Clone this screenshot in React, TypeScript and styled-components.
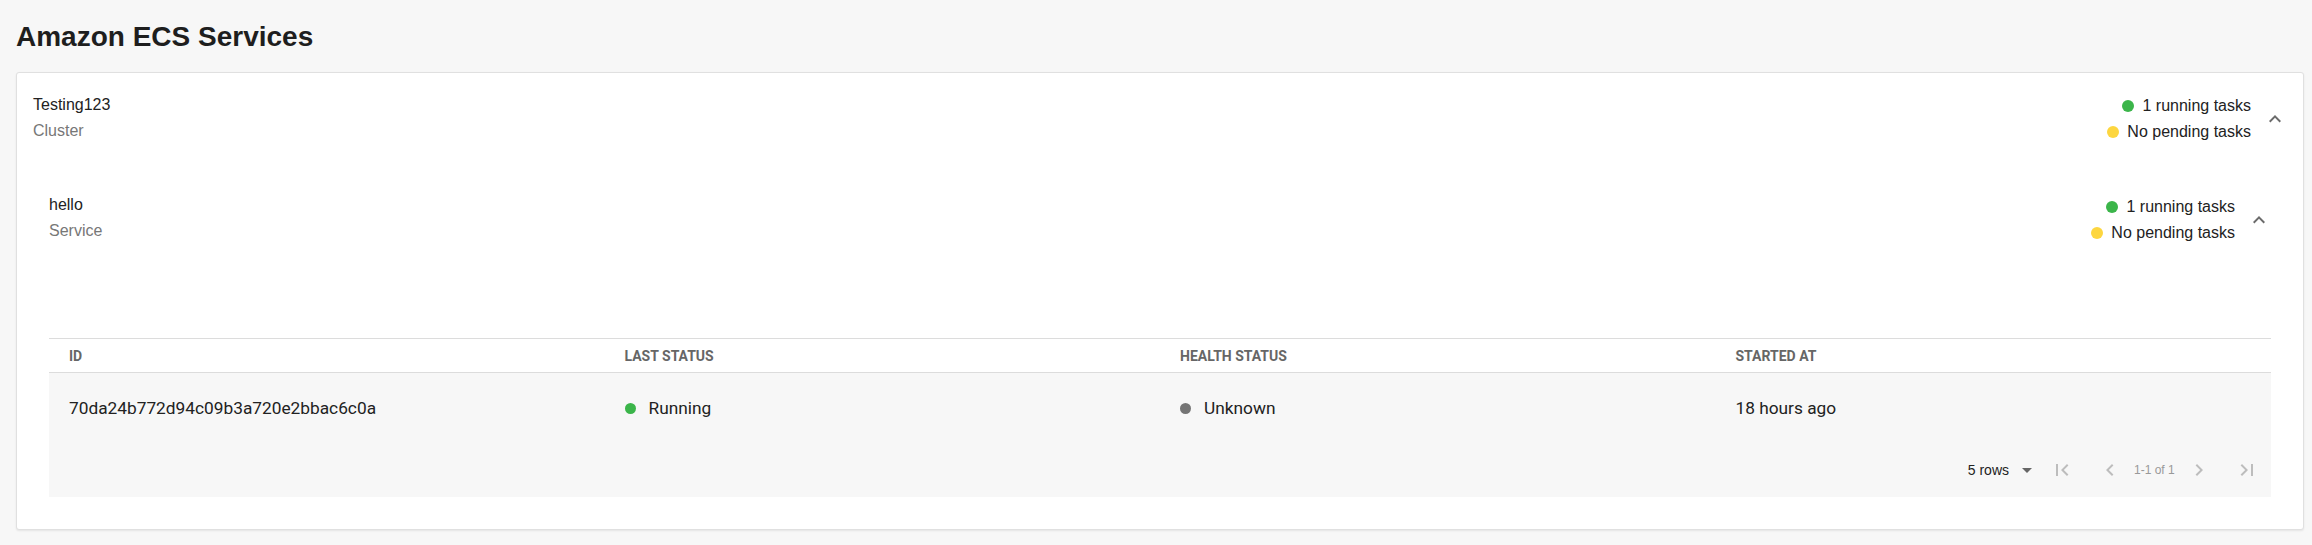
import React from "react";
import styled, { createGlobalStyle } from "styled-components";

const GlobalStyle = createGlobalStyle`
  html, body { margin: 0; padding: 0; background: #f7f7f7; }
  body { font-family: "Liberation Sans", Arial, sans-serif; color: #222; }
  * { box-sizing: border-box; }
`;

const Page = styled.div`
  padding: 0 8px 15px 16px;
`;

const Title = styled.h1`
  margin: 21px 0 19px 0;
  font-size: 28px;
  line-height: 32px;
  font-weight: 700;
  color: #1e1e1e;
`;

const Card = styled.section`
  background: #fff;
  border: 1px solid #e0e0e0;
  border-radius: 3px;
  box-shadow: 0 1px 2px rgba(0, 0, 0, 0.08);
`;

const HeaderRow = styled.div<{ $pad: string }>`
  display: flex;
  align-items: flex-start;
  justify-content: space-between;
  padding: ${(p) => p.$pad};
`;

const NameBlock = styled.div`
  display: flex;
  flex-direction: column;
`;

const Name = styled.div`
  font-size: 16px;
  line-height: 26px;
  color: #222;
`;

const Label = styled.div`
  font-size: 16px;
  line-height: 26px;
  color: #777;
`;

const RightSide = styled.div<{ $offset: number }>`
  display: flex;
  align-items: center;
  gap: 12px;
  margin-top: ${(p) => p.$offset}px;
  margin-bottom: ${(p) => -p.$offset}px;
`;

const Stats = styled.div`
  display: flex;
  flex-direction: column;
  align-items: flex-end;
`;

const StatLine = styled.div`
  display: flex;
  align-items: center;
  gap: 8px;
  font-size: 16px;
  line-height: 26px;
  color: #222;
`;

const Dot = styled.span<{ $color: string; $size: number }>`
  display: inline-block;
  width: ${(p) => p.$size}px;
  height: ${(p) => p.$size}px;
  border-radius: 50%;
  background: ${(p) => p.$color};
  flex: none;
`;

const IconBox = styled.span<{ $color: string }>`
  display: inline-flex;
  width: 24px;
  height: 24px;
  color: ${(p) => p.$color};
  flex: none;
  svg {
    width: 24px;
    height: 24px;
    fill: currentColor;
  }
`;

const ClusterBody = styled.div`
  padding: 0 32px 32px 32px;
`;

const Table = styled.div`
  margin-top: 94px;
  border-top: 1px solid #dcdcdc;
`;

const Grid = styled.div<{ $height: number; $bg: string; $border: boolean }>`
  display: grid;
  grid-template-columns: repeat(4, 1fr);
  height: ${(p) => p.$height}px;
  background: ${(p) => p.$bg};
  border-bottom: ${(p) => (p.$border ? "1px solid #dcdcdc" : "none")};
`;

const HeadCell = styled.div`
  display: flex;
  align-items: center;
  padding-left: 20px;
  font-family: Roboto, "Liberation Sans", sans-serif;
  font-size: 14px;
  font-weight: 700;
  color: #666;
  text-transform: uppercase;
`;

const Cell = styled.div`
  display: flex;
  align-items: center;
  gap: 13px;
  padding-left: 20px;
  font-family: Roboto, "Liberation Sans", sans-serif;
  font-size: 17.3px;
  color: #222;
`;

const Body = styled.div`
  background: #f7f7f7;
`;

const Pagination = styled.div`
  display: flex;
  align-items: center;
  justify-content: flex-end;
  height: 54px;
`;

const RowsSelect = styled.div`
  display: flex;
  align-items: center;
  gap: 6px;
  font-size: 14px;
  color: #222;
  margin-right: -1px;
`;

const PageButton = styled.span`
  display: inline-flex;
  align-items: center;
  justify-content: center;
  width: 48px;
  height: 48px;
  color: #bdbdbd;
  svg {
    width: 24px;
    height: 24px;
    fill: currentColor;
  }
`;

const PageInfo = styled.span`
  font-size: 12px;
  color: #999;
  width: 41px;
`;

const ExpandLess = () => (
  <svg viewBox="0 0 24 24">
    <path d="M12 8l-6 6 1.41 1.41L12 10.83l4.59 4.58L18 14z" />
  </svg>
);

const GREEN = "#3bb54a";
const YELLOW = "#fdd63f";
const GRAY = "#757575";

const Header = ({
  name,
  label,
  pad,
  offset,
}: {
  name: string;
  label: string;
  pad: string;
  offset: number;
}) => (
  <HeaderRow $pad={pad}>
    <NameBlock>
      <Name>{name}</Name>
      <Label>{label}</Label>
    </NameBlock>
    <RightSide $offset={offset}>
      <Stats>
        <StatLine>
          <Dot $color={GREEN} $size={12} />
          1 running tasks
        </StatLine>
        <StatLine>
          <Dot $color={YELLOW} $size={12} />
          No pending tasks
        </StatLine>
      </Stats>
      <IconBox $color="#6b6b6b">
        <ExpandLess />
      </IconBox>
    </RightSide>
  </HeaderRow>
);

export default function App() {
  return (
    <>
      <GlobalStyle />
      <Page>
        <Title>Amazon ECS Services</Title>
        <Card>
          <Header name="Testing123" label="Cluster" pad="19px 16px 18px 16px" offset={1} />
          <ClusterBody>
            <Header name="hello" label="Service" pad="30px 0 0 0" offset={2} />
            <Table>
              <Grid $height={34} $bg="#fff" $border>
                <HeadCell>ID</HeadCell>
                <HeadCell>Last Status</HeadCell>
                <HeadCell>Health Status</HeadCell>
                <HeadCell>Started At</HeadCell>
              </Grid>
              <Body>
                <Grid $height={70} $bg="transparent" $border={false}>
                  <Cell>70da24b772d94c09b3a720e2bbac6c0a</Cell>
                  <Cell>
                    <Dot $color={GREEN} $size={11} />
                    Running
                  </Cell>
                  <Cell>
                    <Dot $color={GRAY} $size={11} />
                    Unknown
                  </Cell>
                  <Cell>18 hours ago</Cell>
                </Grid>
                <Pagination>
                  <RowsSelect>
                    5 rows
                    <IconBox $color="#666">
                      <svg viewBox="0 0 24 24">
                        <path d="M7 10l5 5 5-5z" />
                      </svg>
                    </IconBox>
                  </RowsSelect>
                  <PageButton>
                    <svg viewBox="0 0 24 24">
                      <path d="M18.41 16.59L13.82 12l4.59-4.59L17 6l-6 6 6 6zM6 6h2v12H6z" />
                    </svg>
                  </PageButton>
                  <PageButton>
                    <svg viewBox="0 0 24 24">
                      <path d="M15.41 7.41L14 6l-6 6 6 6 1.41-1.41L10.83 12z" />
                    </svg>
                  </PageButton>
                  <PageInfo>1-1 of 1</PageInfo>
                  <PageButton>
                    <svg viewBox="0 0 24 24">
                      <path d="M10 6L8.59 7.41 13.17 12l-4.58 4.59L10 18l6-6z" />
                    </svg>
                  </PageButton>
                  <PageButton>
                    <svg viewBox="0 0 24 24">
                      <path d="M5.59 7.41L10.18 12l-4.59 4.59L7 18l6-6-6-6zM16 6h2v12h-2z" />
                    </svg>
                  </PageButton>
                </Pagination>
              </Body>
            </Table>
          </ClusterBody>
        </Card>
      </Page>
    </>
  );
}
